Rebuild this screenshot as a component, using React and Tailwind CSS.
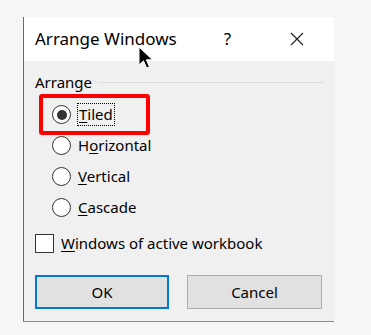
import React from "react";

const font = { fontFamily: '"Noto Sans", "Open Sans", Arial, sans-serif' };

function Radio({ checked }) {
  return (
    <span className="flex h-[19px] w-[19px] items-center justify-center rounded-full border border-[#333] bg-white">
      {checked && <span className="h-[10px] w-[10px] rounded-full bg-[#333]" />}
    </span>
  );
}

function Label({ k, rest, focus }) {
  return (
    <span
      className={
        focus
          ? "ml-[6px] border border-dotted border-black px-[1px] leading-[21px]"
          : "ml-[7px] leading-[21px]"
      }
    >
      <span className="underline underline-offset-2">{k}</span>
      {rest}
    </span>
  );
}

export default function App() {
  const options = [
    { pre: "", k: "T", rest: "iled", checked: true },
    { pre: "H", k: "o", rest: "rizontal" },
    { pre: "", k: "V", rest: "ertical" },
    { pre: "", k: "C", rest: "ascade" },
  ];

  return (
    <div className="relative h-[335px] w-[371px] bg-[#f6f6f6] pl-[23px] pt-[17px] text-black" style={font}>
      <div className="flex h-[305px] w-[311px] flex-col border-b border-l border-b-[#8a8a8a] border-l-[#6b6b6b]">
        {/* title bar */}
        <div className="flex h-[44px] items-center bg-white pl-[11px]">
          <span className="text-[17px]">Arrange Windows</span>
          <span className="ml-[47px] text-[17px]">?</span>
          <svg className="ml-[59px]" width="14" height="14" viewBox="0 0 14 14">
            <path d="M1 1 L13 13 M13 1 L1 13" stroke="#222" strokeWidth="1.2" />
          </svg>
        </div>

        {/* body */}
        <div className="flex flex-1 flex-col bg-[#f0f0f0] pl-[11px] pr-[11px] pt-[11px] text-[15px]">
          <div className="flex items-center">
            <span className="leading-[20px]">Arrange</span>
            <span className="ml-[6px] h-px flex-1 bg-[#dcdcdc]" />
          </div>

          <div className="relative mt-[7px] flex flex-col pl-[17px]">
            <div className="pointer-events-none absolute left-[4px] top-[-5px] h-[41px] w-[111px] rounded-[3px] border-[4px] border-[#ff0000]" />
            {options.map((o) => (
              <div key={o.rest} className="flex h-[31px] items-center">
                <Radio checked={o.checked} />
                {o.checked ? (
                  <Label k={o.k} rest={o.rest} focus />
                ) : (
                  <span className="ml-[7px] leading-[21px]">
                    {o.pre}
                    <span className="underline underline-offset-2">{o.k}</span>
                    {o.rest}
                  </span>
                )}
              </div>
            ))}
          </div>

          <div className="mt-[5px] flex h-[31px] items-center">
            <span className="h-[19px] w-[19px] border border-[#333] bg-white" />
            <span className="ml-[7px]">
              <span className="underline underline-offset-2">W</span>indows of active workbook
            </span>
          </div>

          <div className="mt-[16px] flex justify-between">
            <button className="flex h-[34px] w-[134px] items-center justify-center border-2 border-[#0078d7] bg-[#e1e1e1] text-[15px]">
              OK
            </button>
            <button className="mr-[1px] flex h-[34px] w-[135px] items-center justify-center border border-[#adadad] bg-[#e1e1e1] text-[15px]">
              Cancel
            </button>
          </div>
        </div>
      </div>

      {/* mouse pointer */}
      <svg className="absolute left-[138px] top-[46px]" width="17" height="25" viewBox="0 0 17 25">
        <path
          d="M1 1 L1 19 L5.5 14.8 L8.6 22 L11.4 20.8 L8.4 13.8 L14.5 13.8 Z"
          fill="#000"
          stroke="#fff"
          strokeWidth="1"
          strokeLinejoin="round"
        />
      </svg>
    </div>
  );
}
